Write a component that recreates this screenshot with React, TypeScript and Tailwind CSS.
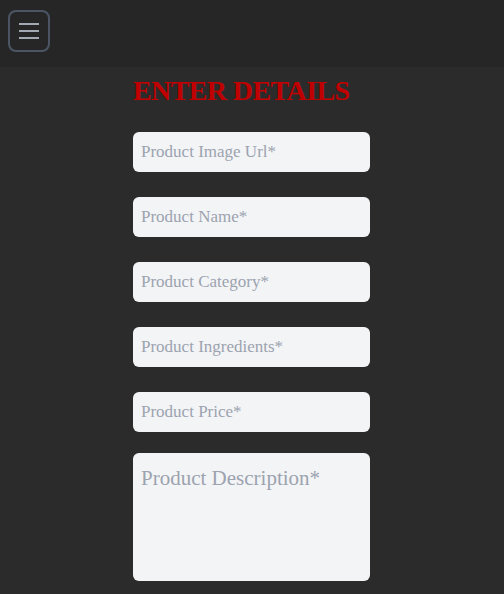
import { useState } from "react";

export default function App() {
  const [form, setForm] = useState({
    image: "",
    name: "",
    category: "",
    ingredients: "",
    price: "",
    description: "",
  });

  const fields: { key: keyof typeof form; label: string }[] = [
    { key: "image", label: "Product Image Url*" },
    { key: "name", label: "Product Name*" },
    { key: "category", label: "Product Category*" },
    { key: "ingredients", label: "Product Ingredients*" },
    { key: "price", label: "Product Price*" },
  ];

  return (
    <div className="min-h-[594px] bg-[#2b2b2b] font-['Liberation_Serif',serif]">
      {/* Top bar */}
      <nav className="h-[67px] bg-[#262626] flex items-start pt-[10px] pl-[8px]">
        <button
          type="button"
          className="w-[42px] h-[42px] rounded-lg border-2 border-[#4b5563] flex items-center justify-center"
        >
          <svg viewBox="0 0 20 16" className="w-[20px] h-[16px]" fill="none" stroke="#a3a9b3" strokeWidth={2}>
            <path d="M0 1h20M0 8h20M0 15h20" />
          </svg>
        </button>
      </nav>

      {/* Form */}
      <div className="w-[237px] ml-[133px] pt-[6px] pb-[14px]">
        <h1 className="text-[#c00000] font-bold text-[28px] leading-[36px] tracking-[-0.6px] whitespace-nowrap">
          ENTER DETAILS
        </h1>
        <div className="mt-[23px] flex flex-col gap-[25px]">
          {fields.map((f) => (
            <input
              key={f.key}
              value={form[f.key]}
              onChange={(e) => setForm({ ...form, [f.key]: e.target.value })}
              placeholder={f.label}
              className="h-[40px] w-full rounded-md bg-[#f3f4f6] px-[8px] text-[17px] text-gray-800 placeholder:text-[#9ca3af] outline-none"
            />
          ))}
          <textarea
            value={form.description}
            onChange={(e) => setForm({ ...form, description: e.target.value })}
            placeholder="Product Description*"
            className="h-[128px] -mt-[4px] w-full rounded-md bg-[#f3f4f6] px-[8px] py-[10px] text-[21px] text-gray-800 placeholder:text-[#9ca3af] outline-none resize-none"
          />
        </div>
      </div>
    </div>
  );
}
